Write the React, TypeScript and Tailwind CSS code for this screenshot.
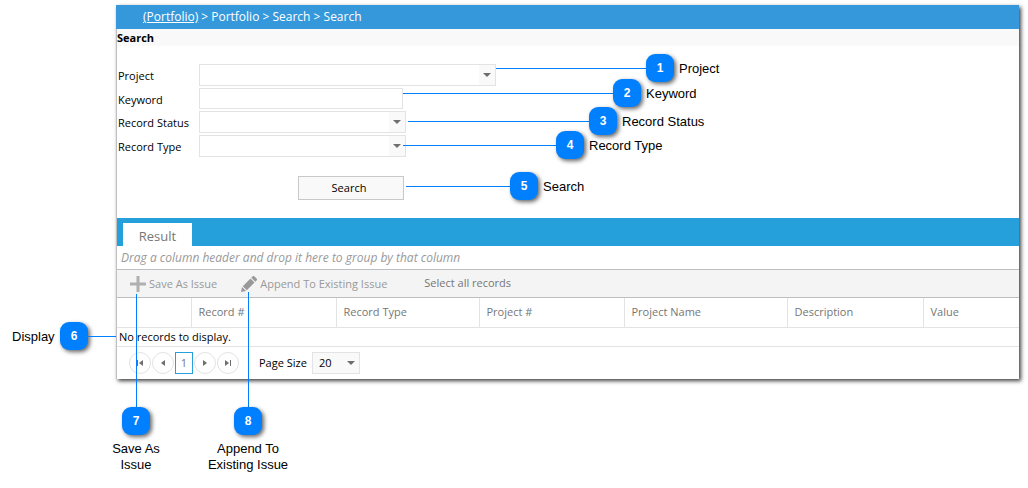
import type { ReactNode } from "react";

type SelectBoxProps = {
  id: string;
  className: string;
  options: string[];
  shaded?: boolean;
};

type Callout = {
  n: number;
  label: string;
  place: string;
  line: string;
};

const columns = [
  { title: "", width: "w-[74px]" },
  { title: "Record #", width: "w-[145px]" },
  { title: "Record Type", width: "w-[143px]" },
  { title: "Project #", width: "w-[145px]" },
  { title: "Project Name", width: "w-[163px]" },
  { title: "Description", width: "w-[136px]" },
  { title: "Value", width: "" },
];

const sideCallouts: Callout[] = [
  { n: 1, label: "Project", place: "left-[496px] top-[54px]", line: "w-[150px]" },
  { n: 2, label: "Keyword", place: "left-[403px] top-[79px]", line: "w-[210px]" },
  { n: 3, label: "Record Status", place: "left-[408px] top-[107px]", line: "w-[181px]" },
  { n: 4, label: "Record Type", place: "left-[403px] top-[131px]", line: "w-[153px]" },
  { n: 5, label: "Search", place: "left-[406px] top-[172px]", line: "w-[104px]" },
];

const bottomCallouts: Callout[] = [
  { n: 7, label: "Save As Issue", place: "left-[106px] top-[294px] w-[60px]", line: "h-[113px]" },
  { n: 8, label: "Append To Existing Issue", place: "left-[203px] top-[292px] w-[90px]", line: "h-[115px]" },
];

function SelectBox({ id, className, options, shaded }: SelectBoxProps) {
  return (
    <div className={`relative h-[22px] border border-[#e3e3e3] ${shaded ? "bg-[#f9f9f9]" : "bg-white"} ${className}`}>
      <select id={id} className="block h-full w-full appearance-none bg-transparent pl-1.5 text-[11px] outline-none">
        {options.map((o) => (
          <option key={o}>{o}</option>
        ))}
      </select>
      <span className="pointer-events-none absolute inset-y-0 right-0 flex w-4 items-center justify-center bg-[#f9f9f9]">
        <svg width="8" height="4" viewBox="0 0 8 4" fill="#6e6e6e">
          <path d="M0 0h8L4 4z" />
        </svg>
      </span>
    </div>
  );
}

function Field({ id, label, children }: { id: string; label: string; children: ReactNode }) {
  return (
    <div className="flex items-center">
      <label htmlFor={id} className="w-[81px] shrink-0 whitespace-nowrap pt-0.5">
        {label}
      </label>
      {children}
    </div>
  );
}

function PagerButton({ label, children }: { label: string; children: ReactNode }) {
  return (
    <button
      type="button"
      aria-label={label}
      className="flex size-[22px] items-center justify-center rounded-full border border-[#e3e3e3] bg-white"
    >
      <svg width="8" height="8" viewBox="0 0 8 8" fill="#6e6e6e">
        {children}
      </svg>
    </button>
  );
}

function Badge({ n }: { n: number }) {
  return (
    <span className="flex size-7 shrink-0 items-center justify-center rounded-[9px] bg-[#0080ff] text-xs font-bold text-white shadow-[2px_2px_4px_rgba(0,0,0,0.6)]">
      {n}
    </span>
  );
}

export default function App() {
  return (
    <div className="relative bg-white pt-[5px] pr-[9px] pb-[109px] pl-[116px] font-['Open_Sans','Noto_Sans',sans-serif] text-[11px] leading-4 text-black">
      <main className="border-l border-[#c0c0c0] bg-white shadow-[2px_2px_4px_rgba(0,0,0,0.75)]">
        <nav className="-ml-px flex h-6 items-center gap-[3px] bg-[#3598db] pl-[27px] text-xs text-white">
          <a href="#" className="underline">(Portfolio)</a>
          <span>&gt; Portfolio &gt; Search &gt; Search</span>
        </nav>
        <h1 className="flex h-[17px] items-center bg-[#f9f9f9] font-bold">Search</h1>

        <form className="pt-[18px] pl-px" onSubmit={(e) => e.preventDefault()}>
          <div className="flex flex-col gap-0.5">
            <Field id="project" label="Project">
              <SelectBox id="project" className="w-[297px]" options={[""]} />
            </Field>
            <Field id="keyword" label="Keyword">
              <input id="keyword" type="text" className="h-[21px] w-[204px] border border-[#e3e3e3] bg-white px-1.5 outline-none" />
            </Field>
            <Field id="status" label="Record Status">
              <SelectBox id="status" className="w-[207px]" options={[""]} />
            </Field>
            <Field id="type" label="Record Type">
              <SelectBox id="type" className="w-[207px]" options={[""]} />
            </Field>
          </div>
          <button type="submit" className="mt-[19px] mb-[18px] ml-[180px] block h-6 w-[106px] border border-[#c8c8c8] bg-[#f9f9f9] pr-1">
            Search
          </button>
        </form>

        <div className="flex h-7 items-end bg-[#25a0da] pl-1.5">
          <button type="button" className="h-[23px] w-[69px] bg-white pt-1 text-[13px] leading-[19px] text-[#767676]">
            Result
          </button>
        </div>
        <p className="flex h-[23px] items-center whitespace-nowrap pl-1 text-xs text-[#999999] italic">
          Drag a column header and drop it here to group by that column
        </p>

        <div className="flex h-[29px] items-center border-y border-[#bfbfc3] bg-[#f4f4f4] pl-[13px] text-[#999999]">
          <button type="button" className="flex items-center gap-[3px] whitespace-nowrap">
            <svg width="16" height="16" viewBox="0 0 16 16" fill="#b0b0b0">
              <path d="M6.5 0h3v6.5H16v3H9.5V16h-3V9.5H0v-3h6.5z" />
            </svg>
            Save As Issue
          </button>
          <button type="button" className="ml-6 flex items-center gap-[3px] whitespace-nowrap">
            <svg width="16" height="16" viewBox="0 0 16 16" fill="#999999">
              <path d="M0 16l1-5 4 4zM1.8 10.2l7.7-7.7 4 4-7.7 7.7zM10.3 1.7L12 0h1l3 3v1l-1.7 1.7z" />
            </svg>
            Append To Existing Issue
          </button>
          <button type="button" className="ml-[37px] whitespace-nowrap pb-0.5 text-[#767676]">
            Select all records
          </button>
        </div>

        <table className="w-full table-fixed border-collapse text-left">
          <thead>
            <tr className="h-[29px] border-b border-[#e3e3e3]">
              {columns.map((c) => (
                <th
                  key={c.title}
                  className={`border-l border-[#e3e3e3] px-[7px] font-normal whitespace-nowrap text-[#767676] first:border-l-0 ${c.width}`}
                >
                  {c.title}
                </th>
              ))}
            </tr>
          </thead>
          <tbody>
            <tr className="h-[19px] border-b border-[#e3e3e3]">
              <td colSpan={7} className="pl-0.5">No records to display.</td>
            </tr>
          </tbody>
        </table>

        <div className="flex h-8 items-center gap-px pl-3">
          <PagerButton label="First page">
            <path d="M1 1h1v6H1zM7 1v6L3 4z" />
          </PagerButton>
          <PagerButton label="Previous page">
            <path d="M6 1v6L2 4z" />
          </PagerButton>
          <button type="button" className="h-[22px] w-[18px] border border-[#25a0da] bg-white text-[#767676]">
            1
          </button>
          <PagerButton label="Next page">
            <path d="M2 1v6l4-3z" />
          </PagerButton>
          <PagerButton label="Last page">
            <path d="M1 1v6l4-3zM6 1h1v6H6z" />
          </PagerButton>
          <label htmlFor="page-size" className="ml-[19px] w-[52px] whitespace-nowrap">
            Page Size
          </label>
          <SelectBox id="page-size" className="w-12" options={["20", "50", "100"]} shaded />
        </div>
      </main>

      {/* Numbered callouts over the screen */}
      <div className="font-['Liberation_Sans',Arial,sans-serif] text-[13px] leading-4">
        {sideCallouts.map((c) => (
          <div key={c.n} className={`pointer-events-none absolute flex items-center whitespace-nowrap ${c.place}`}>
            <span className={`h-px bg-[#0080ff] ${c.line}`} />
            <Badge n={c.n} />
            <span className="ml-[5px] pt-0.5">{c.label}</span>
          </div>
        ))}
        <div className="pointer-events-none absolute top-[322px] left-3 flex items-center">
          <span className="w-12 pt-0.5">Display</span>
          <Badge n={6} />
          <span className="h-px w-7 bg-[#0080ff]" />
        </div>
        {bottomCallouts.map((c) => (
          <div key={c.n} className={`pointer-events-none absolute flex flex-col items-center text-center ${c.place}`}>
            <span className={`w-px bg-[#0080ff] ${c.line}`} />
            <Badge n={c.n} />
            <span className="mt-1.5">{c.label}</span>
          </div>
        ))}
      </div>
    </div>
  );
}
